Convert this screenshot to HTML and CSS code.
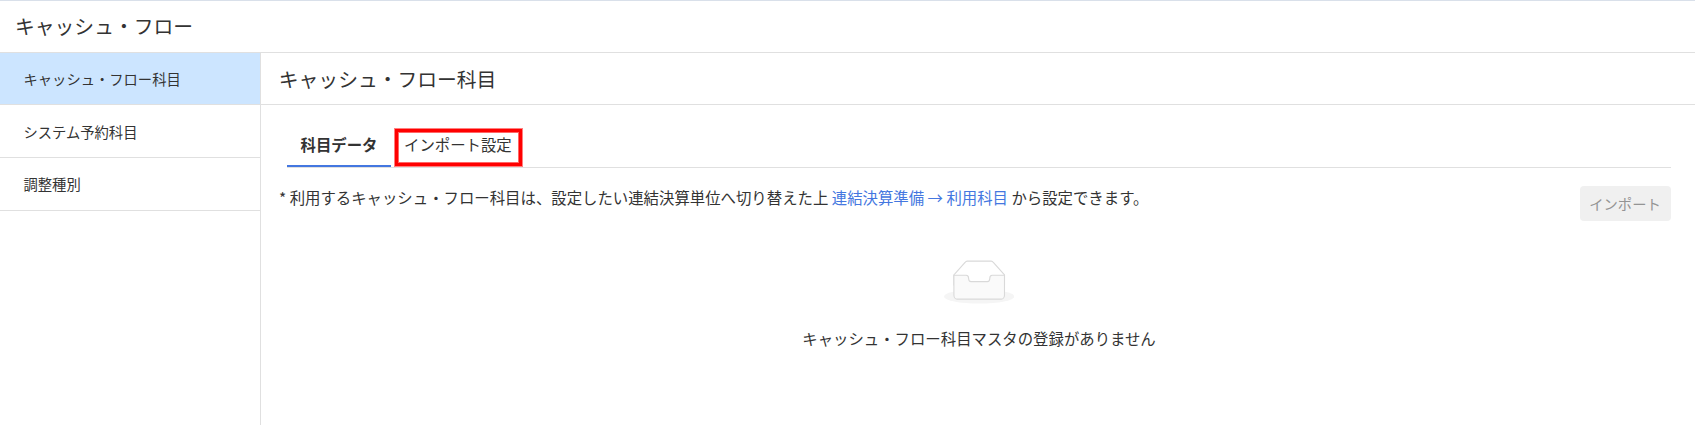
FILE: index.html
```html
<!DOCTYPE html>
<html lang="ja">
<head>
	<meta charset="UTF-8">
	<title>キャッシュ・フロー</title>
	<link rel="stylesheet" href="styles.css">
</head>

<body>

<header class="page-header">
	<h1>キャッシュ・フロー</h1>
</header>

<div class="layout">
	<nav class="sidebar">
		<a class="active">キャッシュ・フロー科目</a>
		<a>システム予約科目</a>
		<a>調整種別</a>
	</nav>

	<main>
		<h2>キャッシュ・フロー科目</h2>

		<div class="content">
			<div class="tabs">
				<div class="tab active">科目データ</div>
				<div class="tab highlight">インポート設定</div>
			</div>

			<div class="toolbar">
				<p>* 利用するキャッシュ・フロー科目は、設定したい連結決算単位へ切り替えた上 <a>連結決算準備 → 利用科目</a> から設定できます。</p>
				<button disabled>インポート</button>
			</div>

			<div class="empty">
				<svg width="70.4" height="44.6" viewBox="0 0 64 41" preserveAspectRatio="none">
					<g transform="translate(0 1)" fill="none" fill-rule="evenodd">
						<ellipse fill="#f5f5f5" cx="32" cy="32.5" rx="32" ry="6.5"/>
						<g fill-rule="nonzero" stroke="#d9d9d9">
							<path d="M55 12.76L44.854 1.258C44.367.474 43.656 0 42.907 0H21.093c-.749 0-1.46.474-1.947 1.257L9 12.761V22h46v-9.24z" fill="#fff"/>
							<path d="M41.613 15.931c0-1.605.994-2.93 2.227-2.931H55v18.137C55 33.26 53.68 35 52.05 35h-40.1C10.32 35 9 33.259 9 31.137V13h11.16c1.233 0 2.227 1.323 2.227 2.928v.022c0 1.605 1.005 2.901 2.237 2.901h14.752c1.232 0 2.237-1.308 2.237-2.913v-.007z" fill="#fafafa"/>
						</g>
					</g>
				</svg>
				<p>キャッシュ・フロー科目マスタの登録がありません</p>
			</div>
		</div>
	</main>
</div>

</body>
</html>
```
FILE: styles.css
```css
* {
	box-sizing: border-box;
}

body {
	margin: 0;
	height: 100vh;
	display: flex;
	flex-direction: column;
	overflow: hidden;
	background: #fff;
	color: #333;
	font-family: 'Noto Sans CJK JP', sans-serif;
	font-size: 15.4px;
	border-top: 1px solid #d9e0ea;
}

h1, h2, p {
	margin: 0;
	font-weight: 400;
}

h1, h2 {
	font-size: 19.8px;
	line-height: 51px;
}

h1 {
	line-height: 49px;
}

.page-header {
	height: 52px;
	padding-left: 15px;
	border-bottom: 1px solid #e0e0e0;
}

.layout {
	flex: 1;
	display: flex;
}

.sidebar {
	width: 261px;
	border-right: 1px solid #e0e0e0;
}

.sidebar a {
	display: block;
	height: 53px;
	padding-left: 23.5px;
	border-bottom: 1px solid #e0e0e0;
	font-size: 14.3px;
	line-height: 53px;
}

.sidebar .active {
	height: 52px;
	background: #cce5ff;
	line-height: 52px;
}

.sidebar a:last-child {
	line-height: 52px;
}

main {
	flex: 1;
}

h2 {
	height: 52px;
	padding-left: 17.8px;
	border-bottom: 1px solid #e0e0e0;
}

.content {
	padding: 23px 24px 0 18px;
}

.tabs {
	display: flex;
	gap: 3px;
	height: 40px;
	margin-left: 8px;
	border-bottom: 1px solid #e0e0e0;
}

.tab {
	height: 39px;
	line-height: 33px;
}

.tab.active {
	width: 104px;
	padding-left: 13.5px;
	font-weight: 700;
	border-bottom: 2px solid #4477e0;
}

/* red frame with a soft edge on both sides */
.tab.highlight {
	width: 129px;
	padding-left: 9px;
	border: 1px solid rgba(255, 0, 0, .5);
	box-shadow:
		inset 0 0 0 3px #f00,
		inset 0 0 0 4px rgba(255, 0, 0, .6);
	line-height: 31px;
}

.toolbar {
	display: flex;
	justify-content: space-between;
	padding-top: 18px;
}

.toolbar p {
	margin-top: -6px;
	line-height: 35px;
}

.toolbar a {
	color: #4477e0;
}

button {
	width: 91px;
	height: 35px;
	padding: 0 1px 0 0;
	border: 0;
	border-radius: 4px;
	background: #f0f0f0;
	color: #949494;
	font-family: inherit;
	font-size: 14.3px;
}

.empty {
	display: flex;
	flex-direction: column;
	align-items: center;
	margin-right: -8px;
	padding-top: 39px;
}

.empty p {
	margin-top: 21.5px;
	line-height: 24px;
}
```
